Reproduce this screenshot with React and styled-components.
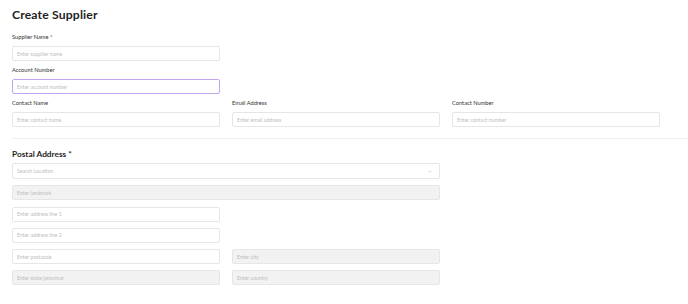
import React from "react";
import styled, { createGlobalStyle } from "styled-components";

const GlobalStyle = createGlobalStyle`
  body {
    margin: 0;
    background: #ffffff;
    font-family: Lato, "Open Sans", sans-serif;
    color: #2b2b2b;
  }
`;

const Page = styled.div`
  padding: 6px 0 16px 12px;
`;

const Title = styled.h1`
  margin: 0 0 9px;
  font-size: 12.2px;
  line-height: 18px;
  font-weight: 700;
  color: #1f1f1f;
  letter-spacing: 0.15px;
`;

const Grid = styled.div`
  display: grid;
  grid-template-columns: repeat(3, 208px);
  column-gap: 12px;
  row-gap: ${(p) => p.$rowGap || 5}px;
`;

const Field = styled.div`
  display: flex;
  flex-direction: column;
  grid-column: ${(p) => p.$span || "auto"};
`;

const Label = styled.label`
  font-size: 5.7px;
  line-height: 8px;
  color: #333333;
  margin-bottom: 5px;
`;

const InputWrap = styled.div`
  position: relative;
  display: flex;
`;

const Input = styled.input`
  box-sizing: border-box;
  width: 100%;
  height: ${(p) => p.$tall ? 16 : 15}px;
  padding: 0 4px;
  border: 1px solid ${(p) => (p.$focused ? "#c3a6f0" : "#e6e6e6")};
  border-radius: 2px;
  background: ${(p) => (p.$disabled ? "#f2f2f2" : "#ffffff")};
  font-family: Lato, "Open Sans", sans-serif;
  font-size: 5.2px;
  color: #333;
  outline: none;

  &::placeholder {
    color: #bdbdbd;
  }
`;

const Chevron = styled.svg`
  position: absolute;
  right: 8px;
  top: 6.5px;
  width: 4px;
  height: 3px;
`;

const Divider = styled.hr`
  border: none;
  border-top: 1px solid #f0f0f0;
  margin: 11px 0 9px;
`;

const Section = styled.h2`
  margin: 0 0 2px;
  font-size: 8.3px;
  line-height: 13px;
  font-weight: 700;
  color: #1f1f1f;
`;

const contacts = [
  { label: "Contact Name", placeholder: "Enter contact name", col: "1 / 2" },
  { label: "Email Address", placeholder: "Enter email address", col: "2 / 3" },
  { label: "Contact Number", placeholder: "Enter contact number", col: "3 / 4" },
];

export default function App() {
  return (
    <Page>
      <GlobalStyle />
      <Title>Create Supplier</Title>

      <Grid>
        <Field $span="1 / 2">
          <Label>Supplier Name *</Label>
          <Input placeholder="Enter supplier name" />
        </Field>
        <Field $span="1 / 2">
          <Label>Account Number</Label>
          <Input placeholder="Enter account number" $focused />
        </Field>
        {contacts.map((f) => (
          <Field key={f.label} $span={f.col}>
            <Label>{f.label}</Label>
            <Input placeholder={f.placeholder} />
          </Field>
        ))}
      </Grid>

      <Divider />

      <Section>Postal Address *</Section>
      <Grid $rowGap={6.3}>
        <Field $span="1 / 3">
          <InputWrap>
            <Input placeholder="Search Location" $tall />
            <Chevron viewBox="0 0 8 6">
              <path d="M1 1.5 L4 4.5 L7 1.5" fill="none" stroke="#c4c4c4" strokeWidth="1.2" />
            </Chevron>
          </InputWrap>
        </Field>
        <Field $span="1 / 3">
          <Input placeholder="Enter landmark" $disabled />
        </Field>
        <Field $span="1 / 2">
          <Input placeholder="Enter address line 1" />
        </Field>
        <Field $span="1 / 2">
          <Input placeholder="Enter address line 2" />
        </Field>
        <Field $span="1 / 2">
          <Input placeholder="Enter postcode" />
        </Field>
        <Field $span="2 / 3">
          <Input placeholder="Enter city" $disabled />
        </Field>
        <Field $span="1 / 2">
          <Input placeholder="Enter state/province" $disabled />
        </Field>
        <Field $span="2 / 3">
          <Input placeholder="Enter country" $disabled />
        </Field>
      </Grid>
    </Page>
  );
}
